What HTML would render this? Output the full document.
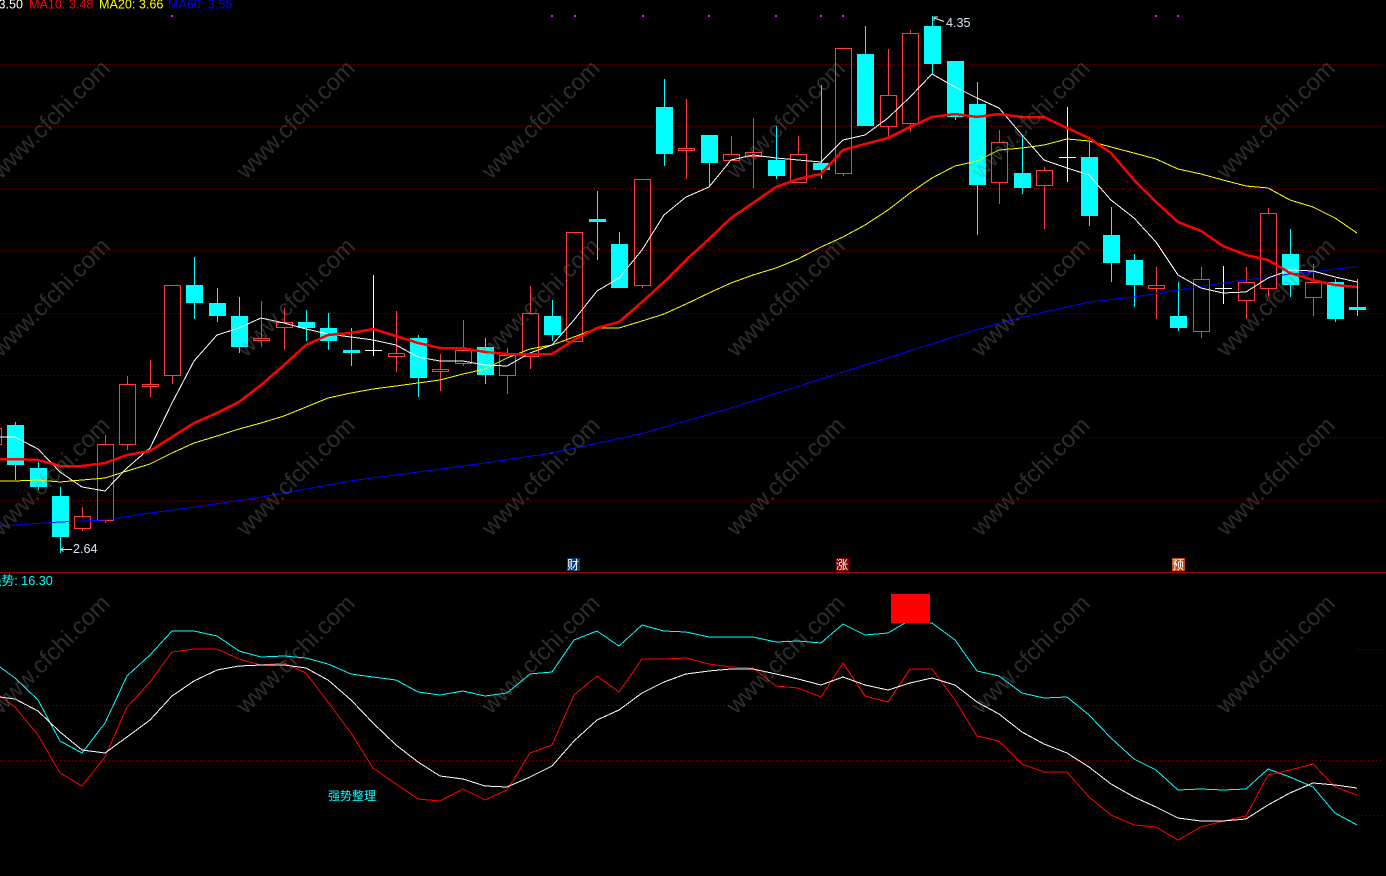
<!DOCTYPE html>
<html lang="zh">
<head>
<meta charset="utf-8">
<title>K线图</title>
<style>
html,body{margin:0;padding:0;background:#000;width:1386px;height:876px;overflow:hidden}
svg{display:block;position:absolute;left:0;top:0}
.t{font-family:"Liberation Sans","WenQuanYi Zen Hei",sans-serif;font-size:12.6px}
.c{font-family:"WenQuanYi Zen Hei","Noto Sans CJK SC",sans-serif;font-size:12px}
.wm{font-family:"Liberation Sans",sans-serif;font-size:23.6px;fill:rgba(128,128,128,.35)}
</style>
</head>
<body>
<svg width="1386" height="876" viewBox="0 0 1386 876" xmlns="http://www.w3.org/2000/svg">
<rect width="1386" height="876" fill="#000"/>

<!-- grid -->
<g stroke="#800000" stroke-width="1" stroke-dasharray="1 3" fill="none" shape-rendering="crispEdges">
<path d="M2 64.5H1386M2 126.5H1386M2 188.5H1386M2 250.5H1386M2 313.5H1386M2 375.5H1386M2 437.5H1386M2 500.5H1386"/>
<path d="M0 705.5H1383M0 760.5H1383M1358 649.5H1383M1358 815.5H1383"/>
</g>
<rect x="0" y="572" width="1386" height="1" fill="#990000"/>

<!-- magenta dots -->
<g fill="#ff00ff" shape-rendering="crispEdges">
<rect x="171" y="15" width="2" height="2"/><rect x="551" y="15" width="2" height="2"/><rect x="574" y="15" width="2" height="2"/><rect x="642" y="15" width="2" height="2"/><rect x="708" y="15" width="2" height="2"/><rect x="775" y="15" width="2" height="2"/><rect x="820" y="15" width="2" height="2"/><rect x="842" y="15" width="2" height="2"/><rect x="1155" y="15" width="2" height="2"/><rect x="1177" y="15" width="2" height="2"/>
</g>

<!-- cyan wicks -->
<path shape-rendering="crispEdges" fill="none" stroke="#00ffff" stroke-width="1" d="M15.5 422V480M38.5 462V490M60.5 487V553M194.5 257V319M217.5 288V322M239.5 297V353M306.5 310V341M328.5 313V350M351.5 328V366M418.5 335V397M485.5 338V384M552.5 300V341M597.5 191V260M619.5 232V288M664.5 79V166M709.5 135V187M776.5 126V179M821.5 85V179M865.5 26V126M932.5 16V74M955.5 61V120M977.5 82V235M1022.5 135V194M1089.5 142V226M1111.5 207V282M1134.5 254V307M1178.5 282V331M1290.5 229V297M1335.5 279V322M1357.5 279V316"/>
<!-- cyan bodies -->
<path shape-rendering="crispEdges" fill="#00ffff" d="M7 425h17v40h-17zM30 468h17v19h-17zM52 496h17v41h-17zM186 285h17v18h-17zM209 303h17v13h-17zM231 316h17v31h-17zM298 322h17v6h-17zM320 328h17v13h-17zM343 350h17v3h-17zM410 338h17v40h-17zM477 347h17v28h-17zM544 316h17v19h-17zM589 219h17v3h-17zM611 244h17v44h-17zM656 107h17v47h-17zM701 135h17v28h-17zM768 160h17v16h-17zM813 163h17v7h-17zM857 54h17v72h-17zM924 26h17v38h-17zM947 61h17v56h-17zM969 104h17v81h-17zM1014 173h17v15h-17zM1081 157h17v59h-17zM1103 235h17v28h-17zM1126 260h17v25h-17zM1170 316h17v12h-17zM1282 254h17v31h-17zM1327 282h17v37h-17zM1349 307h17v3h-17z"/>

<!-- red candles -->
<path shape-rendering="crispEdges" fill="none" stroke="#ff3c3c" stroke-width="1" d="
M-14.5 428.5h16v16h-16z
M74.5 516.5h16v12h-16zM82.5 507V516M82.5 529V531
M97.5 444.5h16v76h-16zM105.5 435V444M105.5 521V523
M119.5 384.5h16v60h-16zM127.5 376V384M127.5 445V450
M142.5 384.5h16v2h-16zM150.5 360V384M150.5 387V397
M164.5 285.5h16v90h-16zM172.5 376V384
M253.5 338.5h16v2h-16zM261.5 301V338M261.5 341V347
M276.5 322.5h16v5h-16zM284.5 308V322M284.5 328V350
M388.5 353.5h16v3h-16zM396.5 311V353M396.5 357V372
M432.5 369.5h16v2h-16zM440.5 354V369M440.5 372V391
M455.5 350.5h16v13h-16zM463.5 320V350M463.5 364V366
M499.5 355.5h16v20h-16zM507.5 348V355M507.5 376V394
M522.5 313.5h16v43h-16zM530.5 286V313M530.5 357V369
M566.5 232.5h16v109h-16z
M634.5 179.5h16v106h-16zM642.5 286V288
M678.5 148.5h16v2h-16zM686.5 99V148M686.5 151V179
M723.5 154.5h16v6h-16zM731.5 136V154
M745.5 152.5h16v4h-16zM753.5 118V152M753.5 157V188
M790.5 154.5h16v28h-16zM798.5 136V154
M835.5 48.5h16v125h-16zM843.5 174V176
M880.5 95.5h16v31h-16zM888.5 49V95M888.5 127V138
M902.5 33.5h16v90h-16zM910.5 30V33M910.5 124V132
M991.5 142.5h16v40h-16zM999.5 130V142M999.5 183V204
M1036.5 170.5h16v15h-16zM1044.5 167V170M1044.5 186V229
M1148.5 285.5h16v3h-16zM1156.5 267V285M1156.5 289V319
M1193.5 279.5h16v52h-16zM1201.5 267V279M1201.5 332V338
M1238.5 282.5h16v18h-16zM1246.5 267V282M1246.5 301V319
M1260.5 213.5h16v75h-16zM1268.5 208V213M1268.5 289V297
M1305.5 282.5h16v15h-16zM1313.5 264V282M1313.5 298V316"/>

<!-- white doji -->
<path shape-rendering="crispEdges" fill="none" stroke="#fff" stroke-width="1" d="M373.5 275V356M365 350.5H382M1067.5 107V182M1059 157.5H1076M1223.5 266V304M1215 288.5H1232"/>

<!-- MA60 blue -->
<polyline shape-rendering="crispEdges" fill="none" stroke="#0000ff" stroke-width="1" points="0,526 60,522 105,520 150,513 195,507 262,497 350,481 418,472 485,463 552,453 640,434 731,408 821,379 900,354 960,335 1000,323 1044,312 1090,302 1133,297 1178,290 1223,283 1268,277 1290,274 1313,272 1335,269 1357,267"/>
<!-- MA20 yellow -->
<polyline shape-rendering="crispEdges" fill="none" stroke="#ffff00" stroke-width="1" points="0,481 15,481 38,480 60,482 82,480 105,478 127,471 150,464 172,453 194,443 217,436 239,429 261,423 284,416 306,407 328,398 351,393 373,389 396,386 418,383 440,380 463,374 485,369 507,358 530,349 552,345 574,337 597,328 619,328 642,321 664,314 686,304 709,293 731,283 753,275 776,268 798,259 821,247 843,237 865,225 888,210 910,193 932,178 955,166 977,161 999,150 1022,148 1044,145 1067,139 1089,141 1111,147 1134,153 1156,159 1178,169 1201,174 1223,180 1246,186 1268,188 1290,200 1313,207 1335,218 1357,233"/>
<!-- MA5 white -->
<polyline shape-rendering="crispEdges" fill="none" stroke="#fff" stroke-width="1" points="0,437 15,437 38,449 60,472 82,487 105,491 127,468 150,448 172,403 194,361 217,335 239,328 261,318 284,323 306,329 328,334 351,337 373,340 396,345 418,357 440,361 463,361 485,365 507,366 530,353 552,345 574,320 597,291 619,278 642,250 664,215 686,197 709,187 731,160 753,155 776,158 798,160 821,162 843,140 865,135 888,118 910,97 932,74 955,87 977,98 999,108 1022,135 1044,160 1067,168 1089,175 1111,200 1134,218 1156,242 1178,275 1201,288 1223,293 1246,292 1268,278 1290,270 1313,271 1335,277 1357,282"/>
<!-- MA10 red -->
<polyline shape-rendering="crispEdges" fill="none" stroke="#ff0000" stroke-width="2.5" points="0,459 15,459 38,460 60,466 82,466 105,463 127,455 150,451 172,437 194,423 217,413 239,402 261,385 284,365 306,345 328,335 351,333 373,329 396,336 418,343 440,348 463,348 485,352 507,354 530,354 552,354 574,340 597,328 619,322 642,302 664,282 686,260 709,239 731,218 753,203 776,187 798,179 821,174 843,150 865,144 888,138 910,127 932,117 955,114 977,117 999,114 1022,117 1044,117 1067,128 1089,138 1111,153 1134,180 1156,202 1178,222 1201,231 1223,246 1246,255 1268,260 1290,273 1313,280 1335,285 1357,287"/>

<!-- indicator pane -->
<polyline shape-rendering="crispEdges" fill="none" stroke="#00ffff" stroke-width="1" points="0,667 15,678 38,700 60,741 82,753 105,723 127,676 150,655 172,631 194,631 217,636 239,651 261,657 284,656 306,658 328,664 351,674 373,677 396,680 418,692 440,695 463,691 485,696 507,693 530,674 552,672 574,640 597,631 619,646 642,625 664,631 686,632 709,637 731,637 753,637 776,642 798,641 821,643 843,624 865,635 888,633 910,620 932,623 955,640 977,671 999,676 1022,693 1044,698 1067,697 1089,715 1111,738 1134,759 1156,770 1178,790 1201,789 1223,790 1246,789 1268,769 1290,777 1313,787 1335,813 1357,825"/>
<polyline shape-rendering="crispEdges" fill="none" stroke="#ff0000" stroke-width="1" points="0,696 15,707 38,735 60,773 82,786 105,757 127,707 150,682 172,652 194,649 217,649 239,659 261,665 284,663 306,673 328,702 351,733 373,768 396,784 418,799 440,801 463,789 485,800 507,790 530,753 552,745 574,695 597,676 619,692 642,659 664,659 686,658 709,664 731,667 753,668 776,686 798,688 821,697 843,663 865,696 888,702 910,669 932,669 955,700 977,736 999,741 1022,764 1044,772 1067,772 1089,797 1111,815 1134,825 1156,827 1178,840 1201,827 1223,821 1246,816 1268,775 1290,770 1313,764 1335,787 1357,795"/>
<polyline shape-rendering="crispEdges" fill="none" stroke="#fff" stroke-width="1" points="0,697 15,699 38,711 60,732 82,750 105,753 127,737 150,720 172,696 194,681 217,670 239,666 261,665 284,665 306,668 328,680 351,700 373,723 396,745 418,762 440,776 463,779 485,786 507,787 530,777 552,766 574,741 597,720 619,710 642,693 664,682 686,674 709,671 731,669 753,669 776,674 798,679 821,685 843,677 865,685 888,690 910,683 932,678 955,685 977,702 999,714 1022,732 1044,744 1067,753 1089,767 1111,784 1134,797 1156,807 1178,818 1201,821 1223,821 1246,819 1268,805 1290,793 1313,783 1335,785 1357,788"/>
<rect x="891" y="594" width="39" height="29" fill="#ff0000"/>

<!-- arrows -->
<g fill="none" stroke="#e6e6e6" stroke-width="1">
<path d="M72 549.5H61M63.5 547.5L61 549.5L63.5 551.5"/>
<path d="M944 21.5L934 18M938 17H934V21"/>
</g>

<!-- labels -->
<text class="t" x="-1.5" y="8.5" fill="#ffffff">3.50</text>
<text class="t" x="29" y="8.5" fill="#ff0000">MA10: 3.48</text>
<text class="t" x="99" y="8.5" fill="#ffff00">MA20: 3.66</text>
<text class="t" x="168" y="8.5" fill="#0000ff">MA60: 3.55</text>
<text class="t" x="946" y="27" fill="#d8e6f4">4.35</text>
<text class="t" x="73" y="553" fill="#d8e6f4">2.64</text>
<text class="t" x="-11" y="585" fill="#00ffff">强势: 16.30</text>
<text class="c" x="328" y="800" fill="#00ffff">强势整理</text>

<!-- badges -->
<rect x="567" y="558" width="13" height="13" fill="#0a3a70"/>
<text class="c" x="567" y="569" fill="#fff">财</text>
<rect x="836" y="558" width="13" height="13" fill="#800000"/>
<text class="c" x="836" y="569" fill="#fff">涨</text>
<rect x="1172" y="558" width="13" height="13" fill="#c04810"/>
<text class="c" x="1172" y="569" fill="#fff">预</text>

<!-- watermarks -->
<g class="wm">
<text class="wm" transform="translate(1,180) rotate(-45)">www.cfchi.com</text>
<text class="wm" transform="translate(246,180) rotate(-45)">www.cfchi.com</text>
<text class="wm" transform="translate(491,180) rotate(-45)">www.cfchi.com</text>
<text class="wm" transform="translate(736,180) rotate(-45)">www.cfchi.com</text>
<text class="wm" transform="translate(981,180) rotate(-45)">www.cfchi.com</text>
<text class="wm" transform="translate(1226,180) rotate(-45)">www.cfchi.com</text>
<text class="wm" transform="translate(1,358) rotate(-45)">www.cfchi.com</text>
<text class="wm" transform="translate(246,358) rotate(-45)">www.cfchi.com</text>
<text class="wm" transform="translate(491,358) rotate(-45)">www.cfchi.com</text>
<text class="wm" transform="translate(736,358) rotate(-45)">www.cfchi.com</text>
<text class="wm" transform="translate(981,358) rotate(-45)">www.cfchi.com</text>
<text class="wm" transform="translate(1226,358) rotate(-45)">www.cfchi.com</text>
<text class="wm" transform="translate(1,537) rotate(-45)">www.cfchi.com</text>
<text class="wm" transform="translate(246,537) rotate(-45)">www.cfchi.com</text>
<text class="wm" transform="translate(491,537) rotate(-45)">www.cfchi.com</text>
<text class="wm" transform="translate(736,537) rotate(-45)">www.cfchi.com</text>
<text class="wm" transform="translate(981,537) rotate(-45)">www.cfchi.com</text>
<text class="wm" transform="translate(1226,537) rotate(-45)">www.cfchi.com</text>
<text class="wm" transform="translate(1,715) rotate(-45)">www.cfchi.com</text>
<text class="wm" transform="translate(246,715) rotate(-45)">www.cfchi.com</text>
<text class="wm" transform="translate(491,715) rotate(-45)">www.cfchi.com</text>
<text class="wm" transform="translate(736,715) rotate(-45)">www.cfchi.com</text>
<text class="wm" transform="translate(981,715) rotate(-45)">www.cfchi.com</text>
<text class="wm" transform="translate(1226,715) rotate(-45)">www.cfchi.com</text>
</g>
</svg>
</body>
</html>
